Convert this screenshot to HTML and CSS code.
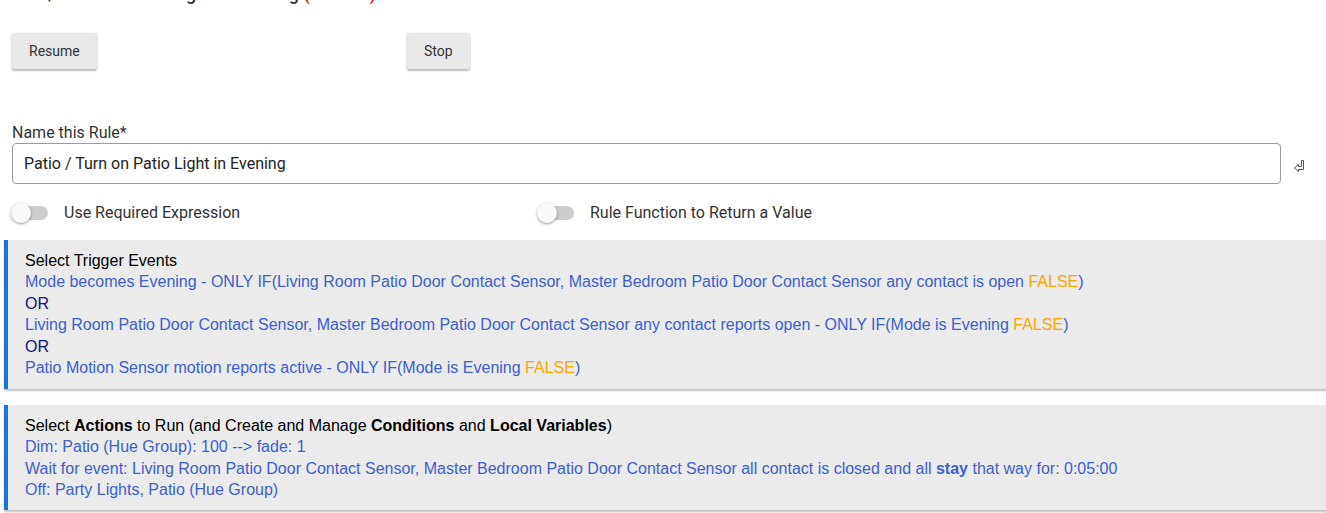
FILE: index.html
```html
<!DOCTYPE html>
<html lang="en">
<head>
  <meta charset="UTF-8" />
  <title>Rule Machine</title>
  <link rel="stylesheet" href="styles.css">
</head>
<body>
  <h2 class="rule-title">Patio / Turn on Patio Light in Evening <span class="paused">(Paused)</span></h2>

  <div class="button-row">
    <div class="button-cell"><button class="btn">Resume</button></div>
    <div class="button-cell"><button class="btn">Stop</button></div>
  </div>

  <div class="name-field">
    <label class="field-label" for="ruleName">Name this Rule*</label>
    <div class="input-row">
      <input type="text" id="ruleName" class="text-input" value="Patio / Turn on Patio Light in Evening" />
      <span class="enter-icon">
        <svg width="13" height="14" viewBox="0 0 13 14">
          <path d="M8.5 1.5 H10.5 V10.5 H5.5 V12.5 L1.5 9 L5.5 5.5 V7.5 H8.5 Z" fill="none" stroke="#555" stroke-width="1"/>
        </svg>
      </span>
    </div>
  </div>

  <div class="toggle-row">
    <label class="toggle-cell">
      <span class="switch"><span class="knob"></span></span>
      <span class="toggle-text">Use Required Expression</span>
    </label>
    <label class="toggle-cell">
      <span class="switch"><span class="knob"></span></span>
      <span class="toggle-text">Rule Function to Return a Value</span>
    </label>
  </div>

  <div class="section">
    <div>Select Trigger Events</div>
    <div class="item">Mode becomes Evening - ONLY IF(Living Room Patio Door Contact Sensor, Master Bedroom Patio Door Contact Sensor any contact is open <span class="false">FALSE</span>)</div>
    <div class="or">OR</div>
    <div class="item">Living Room Patio Door Contact Sensor, Master Bedroom Patio Door Contact Sensor any contact reports open - ONLY IF(Mode is Evening <span class="false">FALSE</span>)</div>
    <div class="or">OR</div>
    <div class="item">Patio Motion Sensor motion reports active - ONLY IF(Mode is Evening <span class="false">FALSE</span>)</div>
  </div>

  <div class="section">
    <div>Select <b>Actions</b> to Run (and Create and Manage <b>Conditions</b> and <b>Local Variables</b>)</div>
    <div class="item">Dim: Patio (Hue Group): 100 --&gt; fade: 1</div>
    <div class="item">Wait for event: Living Room Patio Door Contact Sensor, Master Bedroom Patio Door Contact Sensor all contact is closed and all <b>stay</b> that way for: 0:05:00</div>
    <div class="item">Off: Party Lights, Patio (Hue Group)</div>
  </div>
</body>
</html>
```

FILE: styles.css
```css
body {
  margin: 0;
  font-family: Roboto, 'Liberation Sans', sans-serif;
  color: #333;
  background: #fff;
  overflow: hidden;
}
.rule-title {
  margin: -17px 0 0 0;
  padding: 0 0 0 2px;
  font-size: 18px;
  line-height: 22px;
  font-weight: 500;
  color: #333;
}
.paused {
  color: #f00;
}
.button-row {
  display: flex;
  padding: 28px 12px 0;
}
.button-cell {
  width: 395px;
}
.btn {
  height: 36px;
  padding: 0 17px;
  border: none;
  border-radius: 2px;
  background: #e9e9e9;
  color: #333;
  font-family: Roboto, sans-serif;
  font-size: 14px;
  box-shadow: 0 2px 2px rgba(0, 0, 0, 0.24), 0 0 2px rgba(0, 0, 0, 0.12);
  cursor: pointer;
}
.name-field {
  padding: 53px 0 0 12px;
}
.field-label {
  display: block;
  font-size: 16px;
  line-height: 21px;
  margin-bottom: 0;
}
.input-row {
  display: flex;
  align-items: center;
}
.text-input {
  flex: 1;
  height: 41px;
  box-sizing: border-box;
  padding: 0 11px;
  border: 1px solid #9a9a9a;
  border-radius: 4px;
  font-family: Roboto, sans-serif;
  font-size: 16px;
  color: #222;
}
.enter-icon {
  width: 45px;
  display: flex;
  padding: 4px 0 0 12px;
  box-sizing: border-box;
}
.toggle-row {
  display: flex;
  padding: 19px 12px 0;
}
.toggle-cell {
  width: 526px;
  display: flex;
  align-items: center;
  font-size: 16px;
}
.switch {
  position: relative;
  width: 36px;
  height: 14px;
  border-radius: 7px;
  background: #cdcdcd;
  margin-right: 16px;
}
.knob {
  position: absolute;
  left: -1px;
  top: -3px;
  width: 20px;
  height: 20px;
  border-radius: 50%;
  background: #fafafa;
  box-shadow: 0 1px 3px rgba(0, 0, 0, 0.4);
}
.section {
  margin: 0 -20px 16px 4px;
  padding: 10px 17px;
  border-left: 4px solid #1976d2;
  background: #ebebeb;
  font-family: 'Liberation Sans', Arial, sans-serif;
  font-size: 16px;
  line-height: 1.34;
  color: #000;
  box-shadow: 0 2px 2px rgba(0, 0, 0, 0.25);
}
.toggle-row + .section {
  margin-top: 18px;
}
.item {
  color: #3d5fcf;
}
.or {
  color: #10107f;
}
.false {
  color: #ffa500;
}
```
